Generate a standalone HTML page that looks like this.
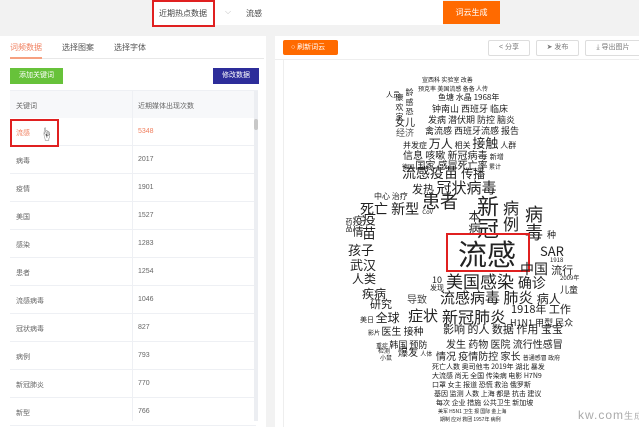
<!DOCTYPE html>
<html><head><meta charset="utf-8"><style>
*{margin:0;padding:0;box-sizing:border-box}
body{width:639px;height:427px;background:#f2f2f2;font-family:"Liberation Sans","Noto Sans CJK SC",sans-serif;position:relative;overflow:hidden;font-size:8px;color:#666}
.a{position:absolute;white-space:nowrap}
.w{position:absolute;white-space:nowrap;color:#222;line-height:1;font-family:"Noto Sans CJK SC",sans-serif}
.row{position:absolute;left:10px;width:246px;height:28px;border-bottom:1px solid #eef0f4;background:#fff}
.row span{position:absolute;top:10px;font-size:7px;color:#666}
.btn{position:absolute;top:40px;height:16px;border:1px solid #ddd;background:#fff;font-size:7px;color:#777;text-align:center;line-height:14px;border-radius:2px}
</style></head><body>
<!-- top -->
<div class="a" style="left:152px;top:0;width:63px;height:27px;background:#fff;border:2px solid #e02020"></div>
<div class="a" style="left:159px;top:8px;font-size:8px;color:#444">近期热点数据</div>
<div class="a" style="left:215px;top:0;width:228px;height:25px;background:#fff"></div>
<div class="a" style="left:225px;top:7px;font-size:8px;color:#bbb">⌵</div>
<div class="a" style="left:246px;top:8px;font-size:8px;color:#444">流感</div>
<div class="a" style="left:443px;top:1px;width:57px;height:23px;background:#ff6a00;color:#fff;font-size:8px;text-align:center;line-height:23px">词云生成</div>
<!-- left panel -->
<div class="a" style="left:0;top:36px;width:266px;height:391px;background:#fff"></div>
<div class="a" style="left:10px;top:42px;font-size:8px;color:#f08060">词频数据</div>
<div class="a" style="left:62px;top:42px;font-size:8px;color:#555">选择图案</div>
<div class="a" style="left:114px;top:42px;font-size:8px;color:#555">选择字体</div>
<div class="a" style="left:10px;top:58px;width:254px;height:1px;background:#e8e8e8"></div>
<div class="a" style="left:10px;top:57px;width:32px;height:2px;background:#f6a080"></div>
<div class="a" style="left:10px;top:68px;width:53px;height:16px;background:#67c23a;color:#fff;font-size:7px;text-align:center;line-height:16px">添加关键词</div>
<div class="a" style="left:213px;top:68px;width:46px;height:16px;background:#2d2d9a;color:#fff;font-size:7px;text-align:center;line-height:16px">修改数据</div>
<div class="a" style="left:10px;top:90px;width:248px;height:330px;background:#fff;border:1px solid #eef0f4"></div>
<div class="row" style="top:91px;background:#f7f8fa"><span style="left:6px">关键词</span><span style="left:128px">近期媒体出现次数</span></div>
<div class="row" style="top:118px"><span style="left:6px;color:#f08060">流感</span><span style="left:128px;color:#f08060">5348</span></div>
<div class="row" style="top:146px"><span style="left:6px">病毒</span><span style="left:128px">2017</span></div>
<div class="row" style="top:174px"><span style="left:6px">疫情</span><span style="left:128px">1901</span></div>
<div class="row" style="top:202px"><span style="left:6px">美国</span><span style="left:128px">1527</span></div>
<div class="row" style="top:230px"><span style="left:6px">感染</span><span style="left:128px">1283</span></div>
<div class="row" style="top:258px"><span style="left:6px">患者</span><span style="left:128px">1254</span></div>
<div class="row" style="top:286px"><span style="left:6px">流感病毒</span><span style="left:128px">1046</span></div>
<div class="row" style="top:314px"><span style="left:6px">冠状病毒</span><span style="left:128px">827</span></div>
<div class="row" style="top:342px"><span style="left:6px">病例</span><span style="left:128px">793</span></div>
<div class="row" style="top:370px"><span style="left:6px">新冠肺炎</span><span style="left:128px">770</span></div>
<div class="row" style="top:398px"><span style="left:6px">新型</span><span style="left:128px">766</span></div>
<div class="a" style="left:132px;top:91px;width:1px;height:330px;background:#eef0f4"></div>
<div class="a" style="left:254px;top:91px;width:4px;height:330px;background:#eceef2"></div>
<div class="a" style="left:254px;top:119px;width:4px;height:11px;background:#c8c8c8;border-radius:2px"></div>
<div class="a" style="left:10px;top:119px;width:49px;height:28px;border:2px solid #e02020"></div>
<div class="a" style="left:40px;top:124px;font-size:13px;color:#555">☝</div>
<!-- right panel -->
<div class="a" style="left:275px;top:36px;width:364px;height:391px;background:#fff"></div>
<div class="a" style="left:283px;top:40px;width:55px;height:15px;background:#ff6a00;color:#fff;font-size:7px;line-height:15px;padding-left:8px;border-radius:2px">○ 刷新词云</div>
<div class="btn" style="left:488px;width:42px">&lt; 分享</div>
<div class="btn" style="left:536px;width:43px">➤ 发布</div>
<div class="btn" style="left:585px;width:56px">⤓ 导出图片</div>
<div class="a" style="left:275px;top:59px;width:364px;height:1px;background:#eee"></div>
<div class="a" style="left:283px;top:60px;width:1px;height:367px;background:#eee"></div>
<!-- word cloud -->
<div class="w" style="left:422px;top:77px;font-size:6px">宣西科 实验室 改善</div>
<div class="w" style="left:418px;top:86px;font-size:6px">预克率 美国流感 备备 人传</div>
<div class="w" style="left:438px;top:94px;font-size:8px">鱼塘 水晶 1968年</div>
<div class="w" style="left:432px;top:104px;font-size:9px">钟南山 西班牙 临床</div>
<div class="w" style="left:428px;top:115px;font-size:9px">发病 潜伏期 防控 脑炎</div>
<div class="w" style="left:405px;top:88px;font-size:8px;writing-mode:vertical-rl">龄 感 恐</div>
<div class="w" style="left:395px;top:93px;font-size:8px;writing-mode:vertical-rl">康 欢 家</div>
<div class="w" style="left:386px;top:92px;font-size:7px">人员</div>
<div class="w" style="left:395px;top:117px;font-size:10px">女儿</div>
<div class="w" style="left:396px;top:128px;font-size:9px;color:#555">经济</div>
<div class="w" style="left:425px;top:126px;font-size:9px">禽流感 西班牙流感 报告</div>
<div class="w" style="left:403px;top:136px;font-size:8px">并发症 <span style="font-size:12px">万人</span> 相关 <span style="font-size:13px">接触</span> 人群</div>
<div class="w" style="left:403px;top:150px;font-size:10px">信息 咳嗽 新冠病毒 <span style="font-size:7px">新增</span></div>
<div class="w" style="left:402px;top:160px;font-size:6px">德国 <span style="font-size:10px">国家 感冒死亡率</span> 累计</div>
<div class="w" style="left:402px;top:166px;font-size:14px">流感疫苗 <span style="font-size:12px">传播</span></div>
<div class="w" style="left:412px;top:180px;font-size:11px">发热 <span style="font-size:15px">冠状病毒</span></div>
<div class="w" style="left:374px;top:193px;font-size:8px">中心 治疗</div>
<div class="w" style="left:360px;top:202px;font-size:14px">死亡 新型 <span style="font-size:6px">CoV</span></div>
<div class="w" style="left:422px;top:192px;font-size:18px">患者</div>
<div class="w" style="left:477px;top:195px;font-size:22px;writing-mode:vertical-rl">新冠</div>
<div class="w" style="left:503px;top:200px;font-size:16px;writing-mode:vertical-rl">病例</div>
<div class="w" style="left:525px;top:205px;font-size:18px;writing-mode:vertical-rl">病毒</div>
<div class="w" style="left:468px;top:210px;font-size:12px;writing-mode:vertical-rl">本病</div>
<div class="w" style="left:352px;top:215px;font-size:11px;writing-mode:vertical-rl">疫情</div>
<div class="w" style="left:362px;top:212px;font-size:14px;writing-mode:vertical-rl">疫苗</div>
<div class="w" style="left:345px;top:218px;font-size:7px;writing-mode:vertical-rl">药品</div>
<div class="w" style="left:547px;top:230px;font-size:9px">种</div>
<div class="w" style="left:348px;top:243px;font-size:13px">孩子</div>
<div class="w" style="left:350px;top:258px;font-size:13px">武汉</div>
<div class="w" style="left:540px;top:244px;font-size:13px">SAR</div>
<div class="w" style="left:458px;top:239px;font-size:29px">流感</div>
<div class="a" style="left:446px;top:233px;width:84px;height:39px;border:2px solid #e02020"></div>
<div class="w" style="left:520px;top:262px;font-size:14px">中国 <span style="font-size:11px">流行</span></div>
<div class="w" style="left:550px;top:257px;font-size:6px">1918</div>
<div class="w" style="left:352px;top:273px;font-size:12px">人类</div>
<div class="w" style="left:432px;top:275px;font-size:9px">10</div>
<div class="w" style="left:446px;top:272px;font-size:17px">美国感染 <span style="font-size:14px">确诊</span></div>
<div class="w" style="left:560px;top:275px;font-size:6px">2009年</div>
<div class="w" style="left:430px;top:285px;font-size:7px">发现</div>
<div class="w" style="left:560px;top:285px;font-size:9px">儿童</div>
<div class="w" style="left:362px;top:288px;font-size:12px">疾病</div>
<div class="w" style="left:407px;top:294px;font-size:10px;color:#444">导致</div>
<div class="w" style="left:440px;top:290px;font-size:15px">流感病毒 肺炎 <span style="font-size:12px">病人</span></div>
<div class="w" style="left:370px;top:299px;font-size:11px">研究</div>
<div class="w" style="left:511px;top:304px;font-size:11px">1918年 工作</div>
<div class="w" style="left:360px;top:312px;font-size:7px">美日 <span style="font-size:12px">全球</span></div>
<div class="w" style="left:408px;top:308px;font-size:15px">症状</div>
<div class="w" style="left:442px;top:308px;font-size:16px">新冠肺炎</div>
<div class="w" style="left:510px;top:318px;font-size:9px">H1N1 甲型 民众</div>
<div class="w" style="left:368px;top:326px;font-size:6px">影片 <span style="font-size:10px">医生 接种</span></div>
<div class="w" style="left:443px;top:324px;font-size:11px">影响 的人 数据 作用 宝宝</div>
<div class="w" style="left:376px;top:340px;font-size:6px">重症 <span style="font-size:9px">韩国 预防</span></div>
<div class="w" style="left:446px;top:339px;font-size:10px">发生 药物 医院 流行性感冒</div>
<div class="w" style="left:378px;top:348px;font-size:6px">检测</div>
<div class="w" style="left:398px;top:347px;font-size:10px">爆发 <span style="font-size:6px">人体</span></div>
<div class="w" style="left:380px;top:355px;font-size:6px">小鼠</div>
<div class="w" style="left:436px;top:351px;font-size:10px">情况 疫情防控 家长 <span style="font-size:6px">普通感冒 政府</span></div>
<div class="w" style="left:432px;top:364px;font-size:7px">死亡人数 奥司他韦 2019年 湖北 暴发</div>
<div class="w" style="left:432px;top:373px;font-size:7px">大流感 尚无 全国 传染病 电影 H7N9</div>
<div class="w" style="left:432px;top:382px;font-size:7px">口罩 女主 报道 恐慌 救治 俄罗斯</div>
<div class="w" style="left:434px;top:391px;font-size:7px">基因 监测 人数 上海 都是 抗击 建议</div>
<div class="w" style="left:436px;top:400px;font-size:7px">每次 企业 措施 公共卫生 新加坡</div>
<div class="w" style="left:438px;top:409px;font-size:5px">美军 H5N1 卫生 报 国际 金上海</div>
<div class="w" style="left:440px;top:417px;font-size:5px">期制 应对 救团 1957年 病例</div>
<div class="a" style="left:578px;top:408px;font-size:12px;color:#aaa;font-family:'Liberation Sans',sans-serif;letter-spacing:1px">kw.com<span style="font-size:9px">生成</span></div>
</body></html>
